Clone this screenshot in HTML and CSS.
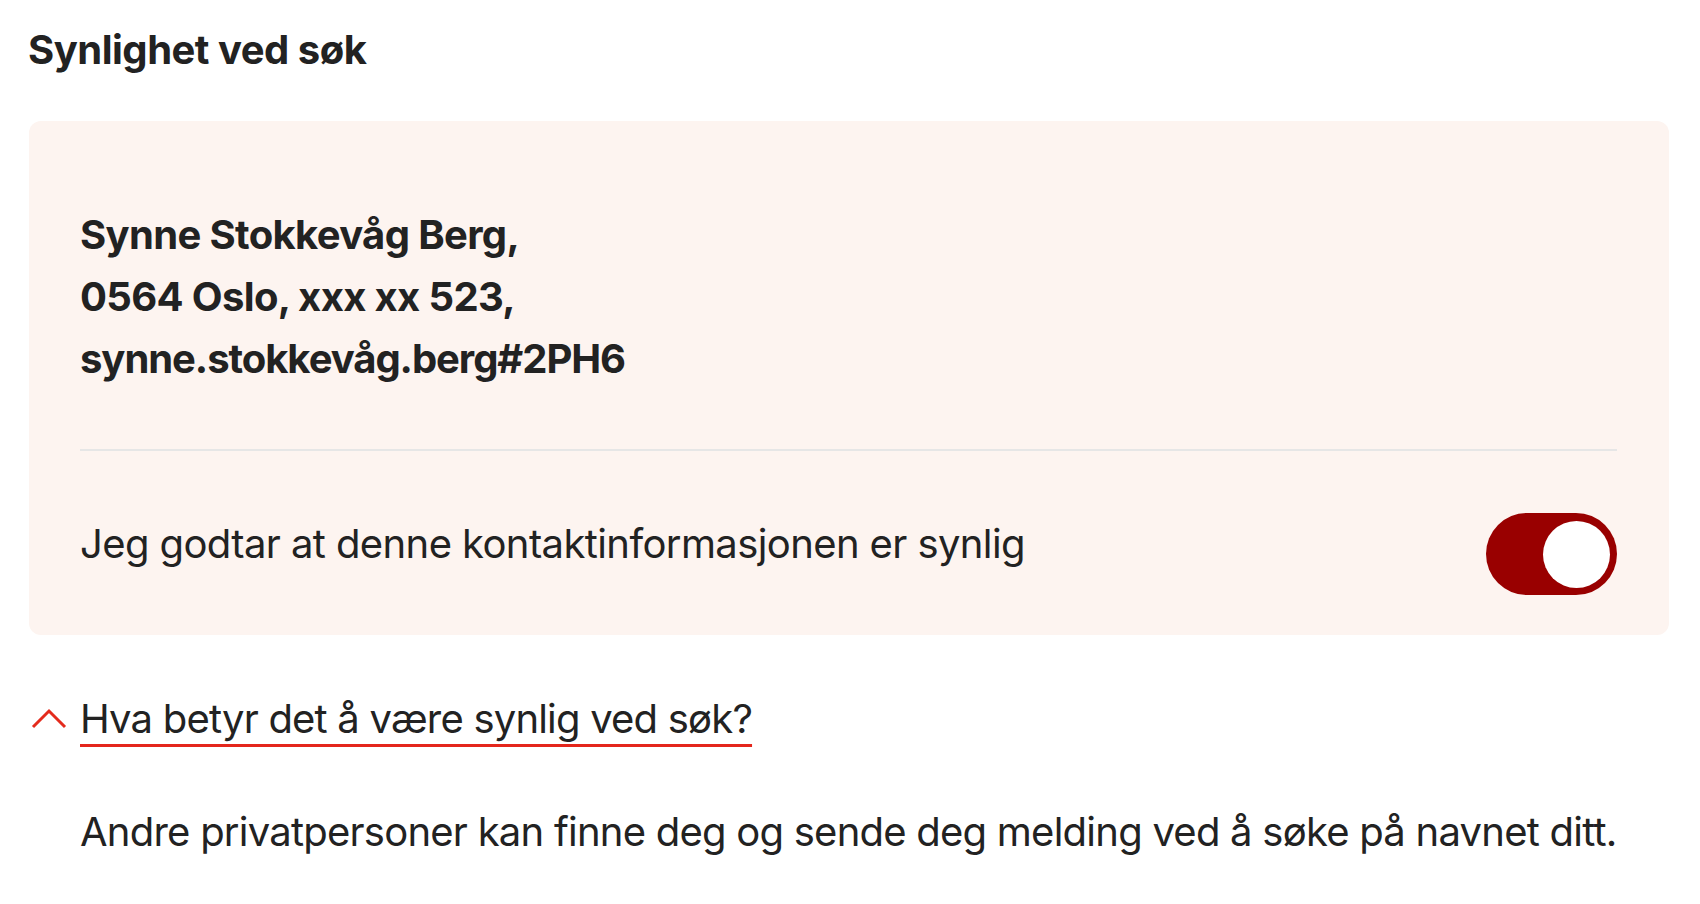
FILE: index.html
```html
<!DOCTYPE html>
<html lang="no">
<head>
<meta charset="utf-8">
<title>Synlighet ved søk</title>
<link rel="stylesheet" href="styles.css">
</head>
<body>
<main class="page">
  <h2 class="title">Synlighet ved søk</h2>
  <section class="card">
    <div class="contact">
      <div>Synne Stokkevåg Berg,</div>
      <div>0564 Oslo, xxx xx 523,</div>
      <div class="handle">synne.stokkevåg.berg#2PH6</div>
    </div>
    <hr class="divider">
    <div class="consent">
      <span class="consent-label">Jeg godtar at denne kontaktinformasjonen er synlig</span>
      <span class="toggle" role="switch" aria-checked="true"><span class="knob"></span></span>
    </div>
  </section>
  <div class="details">
    <div class="summary">
      <svg class="chevron" width="38" height="22" viewBox="0 0 38 22" aria-hidden="true"><polyline points="3,19 19,3 35,19" fill="none" stroke="#e42b1d" stroke-width="3"/></svg>
      <span class="summary-text">Hva betyr det å være synlig ved søk?</span>
    </div>
    <p class="answer">Andre privatpersoner kan finne deg og sende deg melding ved å søke på navnet ditt.</p>
  </div>
</main>
</body>
</html>
```

FILE: styles.css
```css
* { box-sizing: border-box; }
html, body { margin: 0; padding: 0; background: #ffffff; }
body {
  font-family: Inter, "Liberation Sans", Arial, sans-serif;
  color: #222222;
  font-size: 40px;
  line-height: 62px;
  letter-spacing: -0.7px;
}
.page {
  padding: 19px 31px 0 28px;
}
.title {
  margin: 0 0 40px 0;
  font-size: 40px;
  line-height: 62px;
  font-weight: 700;
  letter-spacing: -0.5px;
}
.card {
  background: #fdf4f0;
  border-radius: 12px;
  margin-left: 1px;
  padding: 83px 52px 40px 51px;
}
.contact {
  font-weight: 700;
  letter-spacing: -0.65px;
}
.handle {
  letter-spacing: -1.05px;
}
.divider {
  border: 0;
  height: 2px;
  background: #e6e6e6;
  margin: 59px 0 62px 0;
}
.consent {
  display: flex;
  align-items: flex-start;
  justify-content: space-between;
}
.consent-label {
  font-weight: 400;
  letter-spacing: -0.6px;
}
.toggle {
  display: flex;
  justify-content: flex-end;
  align-items: center;
  width: 131px;
  height: 82px;
  border-radius: 41px;
  background: #990000;
  padding: 0 7px;
  flex-shrink: 0;
}
.knob {
  width: 67px;
  height: 67px;
  border-radius: 50%;
  background: #ffffff;
}
.details {
  margin-top: 53px;
}
.summary {
  display: flex;
  align-items: center;
}
.chevron {
  width: 38px;
  height: 22px;
  margin-left: 2px;
  margin-right: 12px;
  flex-shrink: 0;
}
.summary-text {
  letter-spacing: -0.8px;
  text-decoration: underline;
  text-decoration-color: #e4261c;
  text-decoration-thickness: 3px;
  text-underline-offset: 11px;
}
.answer {
  margin: 51px 0 0 52px;
  white-space: nowrap;
  letter-spacing: -0.76px;
}
```
